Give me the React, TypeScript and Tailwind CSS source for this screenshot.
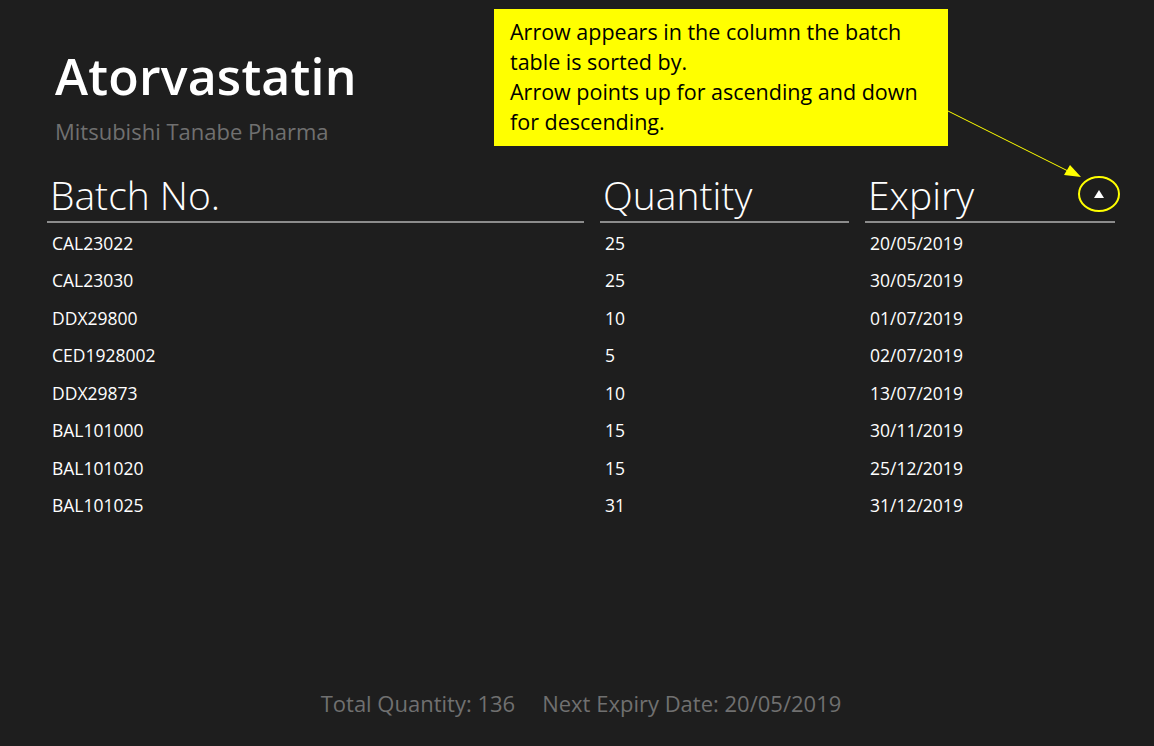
const rows = [
  { batch: "CAL23022", qty: 25, expiry: "20/05/2019" },
  { batch: "CAL23030", qty: 25, expiry: "30/05/2019" },
  { batch: "DDX29800", qty: 10, expiry: "01/07/2019" },
  { batch: "CED1928002", qty: 5, expiry: "02/07/2019" },
  { batch: "DDX29873", qty: 10, expiry: "13/07/2019" },
  { batch: "BAL101000", qty: 15, expiry: "30/11/2019" },
  { batch: "BAL101020", qty: 15, expiry: "25/12/2019" },
  { batch: "BAL101025", qty: 31, expiry: "31/12/2019" },
];

const font = { fontFamily: '"Open Sans", "Noto Sans", sans-serif' };

export default function App() {
  return (
    <div
      className="relative w-[1154px] h-[746px] overflow-hidden bg-[#1e1e1e] text-white"
      style={font}
    >
      <div className="flex flex-col h-full pl-[47px] pr-[39px]">
        {/* header */}
        <div className="pt-[44px] pl-[8px]">
          <h1 className="text-[50px] leading-[64px] font-semibold tracking-[0.2px]">Atorvastatin</h1>
          <p className="text-[22px] leading-[30px] text-[#707070] mt-[8px]">Mitsubishi Tanabe Pharma</p>
        </div>

        {/* table */}
        <div className="grid grid-cols-[537px_249px_250px] gap-x-[16px] mt-[22px]">
          <div className="border-b-2 border-[#8c8c8c] pl-[3px] h-[55px] flex items-end">
            <span className="text-[39px] font-light leading-[52px]">Batch No.</span>
          </div>
          <div className="border-b-2 border-[#8c8c8c] pl-[3px] h-[55px] flex items-end">
            <span className="text-[39px] font-light leading-[52px]">Quantity</span>
          </div>
          <div className="border-b-2 border-[#8c8c8c] pl-[3px] h-[55px] flex items-end justify-between pr-[10px]">
            <span className="text-[39px] font-light leading-[52px]">Expiry</span>
            <svg width="12" height="10" viewBox="0 0 12 10" className="mb-[22px]">
              <path d="M6 1 L11 9 L1 9 Z" fill="#ffffff" />
            </svg>
          </div>
        </div>

        <div className="mt-[1px]">
          {rows.map((r) => (
            <div key={r.batch} className="grid grid-cols-[537px_249px_250px] gap-x-[16px] h-[37.5px] items-center text-[17.5px]">
              <span className="pl-[5px]">{r.batch}</span>
              <span className="pl-[5px]">{r.qty}</span>
              <span className="pl-[5px]">{r.expiry}</span>
            </div>
          ))}
        </div>

        {/* footer */}
        <div className="mt-auto mb-[26px] flex justify-center gap-[27px] text-[22px] text-[#707070]">
          <span>Total Quantity: 136</span>
          <span>Next Expiry Date: 20/05/2019</span>
        </div>
      </div>

      {/* annotation callout */}
      <div className="absolute left-[494px] top-[9px] w-[454px] h-[137px] bg-[#ffff00] text-black pl-[16px] pt-[8px] text-[21.5px] leading-[30px]">
        <p>Arrow appears in the column the batch</p>
        <p>table is sorted by.</p>
        <p>Arrow points up for ascending and down</p>
        <p>for descending.</p>
      </div>

      <svg className="absolute left-0 top-0" width="1154" height="746" viewBox="0 0 1154 746">
        <line x1="946" y1="110" x2="1068" y2="171" stroke="#ffff00" strokeWidth="1" />
        <path d="M1081 177 L1064 175 L1070 165 Z" fill="#ffff00" />
        <ellipse cx="1099" cy="194" rx="20" ry="17" fill="none" stroke="#ffff00" strokeWidth="2" />
      </svg>
    </div>
  );
}
